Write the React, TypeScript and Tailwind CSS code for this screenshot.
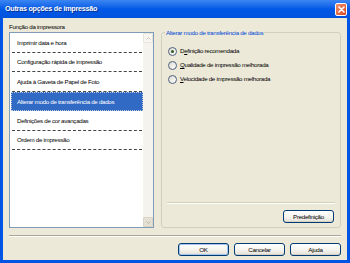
import React from "react";

const items = [
  "Imprimir data e hora",
  "Configuração rápida de impressão",
  "Ajuda à Gaveta de Papel de Foto",
  "Alterar modo de transferência de dados",
  "Definições de cor avançadas",
  "Ordem de impressão",
];

const XpButton = ({ children, focused = false }: { children: React.ReactNode; focused?: boolean }) => (
  <button
    className={
      "w-[51px] h-[13px] rounded-[3px] border border-[#003c74] bg-gradient-to-b from-white via-[#f6f5f0] to-[#e3e0d6] text-[6.2px] tracking-[-0.3px] leading-[11px] text-black " +
      (focused ? "shadow-[inset_0_0_0_1px_#a6c3ef]" : "shadow-[inset_0_-1px_0_#d6d0c5]")
    }
  >
    {children}
  </button>
);

const Radio = ({ checked = false, children }: { checked?: boolean; children: React.ReactNode }) => (
  <div className="flex items-center h-[14px] gap-[3px]">
    <span className="w-[9px] h-[9px] rounded-full border border-[#4e5f7e] bg-gradient-to-br from-[#dcdad0] to-white flex items-center justify-center">
      {checked && <span className="w-[3px] h-[3px] rounded-full bg-[#2d5a2a]" />}
    </span>
    <span className="text-[6.2px] tracking-[-0.3px] text-black">{children}</span>
  </div>
);

export default function App() {
  return (
    <div
      className="w-[350px] h-[263px] bg-[#0055e5] flex flex-col overflow-hidden"
      style={{ fontFamily: '"Liberation Sans", Arial, sans-serif' }}
    >
      {/* title bar */}
      <div className="h-[18px] flex items-center justify-between pl-[5px] pr-[3px] bg-gradient-to-b from-[#3b86f2] via-[#0058e6] to-[#0052dc]">
        <span className="text-white font-bold text-[7.2px] tracking-[-0.25px] [text-shadow:1px_1px_0_#0a2f8c]">
          Outras opções de impressão
        </span>
        <span className="w-[12px] h-[13px] rounded-[2px] border border-white bg-gradient-to-br from-[#f0906c] to-[#d8451c] flex items-center justify-center">
          <svg width="7" height="7" viewBox="0 0 7 7">
            <path d="M1 1L6 6M6 1L1 6" stroke="white" strokeWidth="1.6" strokeLinecap="round" />
          </svg>
        </span>
      </div>

      {/* body */}
      <div className="flex-1 mx-[3px] mb-[3px] bg-[#ece9d8] flex flex-col px-[6px] pt-[3px] text-[6.2px] tracking-[-0.3px]">
        <div className="flex gap-[7px]">
          {/* left column */}
          <div className="flex flex-col w-[145px]">
            <div className="h-[11px] leading-[11px] text-black">Função da impressora</div>
            <div className="h-[196px] border border-[#7f9db9] bg-white flex">
              <div className="flex-1 flex flex-col pl-[1px]">
                {items.map((t, i) =>
                  i === 3 ? (
                    <div
                      key={t}
                      className="h-[19.5px] bg-[#316ac5] text-white flex items-center pl-[5px] border border-dotted border-[#c0c8d8]"
                    >
                      {t}
                    </div>
                  ) : (
                    <div
                      key={t}
                      className="h-[19.5px] text-black flex items-center pl-[5px] mx-[1px] border-b border-dashed border-[#444]"
                    >
                      {t}
                    </div>
                  )
                )}
              </div>
              {/* scrollbar */}
              <div className="w-[10px] bg-[#f4f3ee] flex flex-col justify-between">
                <div className="h-[10px] bg-[#f7f6f1] border border-[#e8e6dc] rounded-[1px] flex items-center justify-center">
                  <svg width="5" height="3" viewBox="0 0 5 3">
                    <path d="M0.5 2.5L2.5 0.5L4.5 2.5" stroke="#c9c7ba" fill="none" />
                  </svg>
                </div>
                <div className="h-[10px] bg-[#e4e1d4] border border-[#d8d5c6] rounded-[1px] flex items-center justify-center">
                  <svg width="5" height="3" viewBox="0 0 5 3">
                    <path d="M0.5 0.5L2.5 2.5L4.5 0.5" stroke="#b9b6a6" fill="none" />
                  </svg>
                </div>
              </div>
            </div>
          </div>

          {/* right column */}
          <fieldset className="mt-[6px] h-[201px] flex-1 border border-[#d0d0bf] rounded-[3px] flex flex-col px-0">
            <legend className="ml-[3px] px-[1px] leading-[11px] text-[#0046d5]">
              Alterar modo de transferência de dados
            </legend>
            <div className="pl-[6px] pt-[6px] flex flex-col">
              <Radio checked>
                D<span className="underline">e</span>finição recomendada
              </Radio>
              <Radio>
                <span className="underline">Q</span>ualidade de impressão melhorada
              </Radio>
              <Radio>
                <span className="underline">V</span>elocidade de impressão melhorada
              </Radio>
            </div>
            <div className="flex-1" />
            <div className="mx-[5px] h-[2px] border-t border-[#d0d0bf] border-b border-b-white" />
            <div className="flex justify-end mr-[6px] mt-[6px] mb-[4px]">
              <XpButton>Predefinição</XpButton>
            </div>
          </fieldset>
        </div>

        {/* separator */}
        <div className="mt-[7px] h-[2px] border-t border-[#aca899] border-b border-b-white" />

        {/* buttons */}
        <div className="flex justify-end gap-[5px] mt-[6px]">
          <XpButton focused>OK</XpButton>
          <XpButton>Cancelar</XpButton>
          <XpButton>Ajuda</XpButton>
        </div>
      </div>
    </div>
  );
}
